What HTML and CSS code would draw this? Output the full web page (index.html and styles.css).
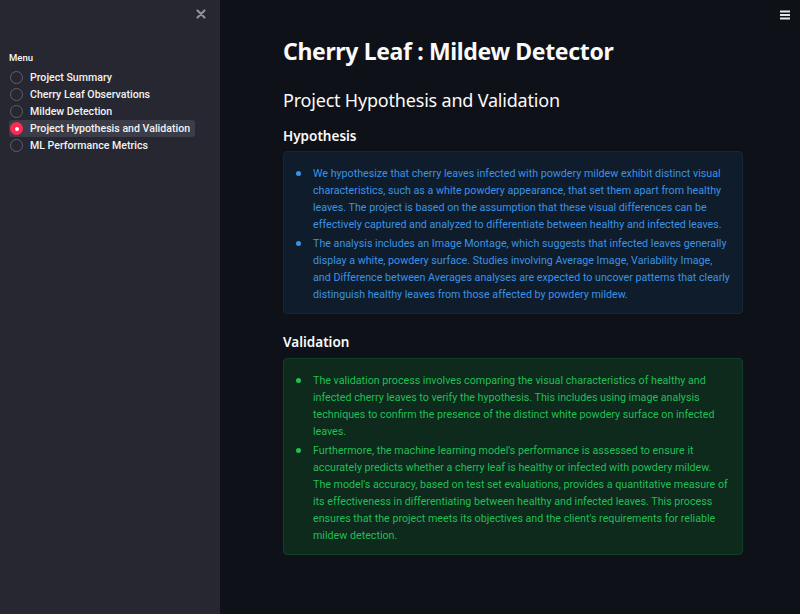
FILE: index.html
```html
<!DOCTYPE html>
<html>
<head>
<meta charset="utf-8">
<link rel="stylesheet" href="styles.css">
</head>
<body>
<div class="app">
  <aside class="sidebar">
    <div class="close">
      <svg width="10" height="10" viewBox="0 0 10 10"><path d="M1.5 1.5 L8.5 8.5 M8.5 1.5 L1.5 8.5" stroke="#8e9099" stroke-width="2.2" stroke-linecap="round"/></svg>
    </div>
    <div class="menu-label">Menu</div>
    <ul class="radios">
      <li class="radio"><span class="dot"></span>Project Summary</li>
      <li class="radio"><span class="dot"></span>Cherry Leaf Observations</li>
      <li class="radio"><span class="dot"></span>Mildew Detection</li>
      <li class="radio selected"><span class="dot"></span>Project Hypothesis and Validation</li>
      <li class="radio"><span class="dot"></span>ML Performance Metrics</li>
    </ul>
  </aside>
  <main class="main">
    <div class="hamburger">
      <svg width="10" height="10" viewBox="0 0 10 10"><path d="M0 1.5 H10 M0 5 H10 M0 8.5 H10" stroke="#e6e6e6" stroke-width="1.8"/></svg>
    </div>
    <div class="content">
      <h1 class="title">Cherry Leaf : Mildew Detector</h1>
      <h2 class="subtitle">Project Hypothesis and Validation</h2>
      <h3 class="section">Hypothesis</h3>
      <div class="alert info">
        <ul>
          <li>We hypothesize that cherry leaves infected with powdery mildew exhibit distinct visual characteristics, such as a white powdery appearance, that set them apart from healthy leaves. The project is based on the assumption that these visual differences can be effectively captured and analyzed to differentiate between healthy and infected leaves.</li>
          <li>The analysis includes an Image Montage, which suggests that infected leaves generally display a white, powdery surface. Studies involving Average Image, Variability Image, and Difference between Averages analyses are expected to uncover patterns that clearly distinguish healthy leaves from those affected by powdery mildew.</li>
        </ul>
      </div>
      <h3 class="section second">Validation</h3>
      <div class="alert success">
        <ul>
          <li>The validation process involves comparing the visual characteristics of healthy and infected cherry leaves to verify the hypothesis. This includes using image analysis techniques to confirm the presence of the distinct white powdery surface on infected leaves.</li>
          <li>Furthermore, the machine learning model's performance is assessed to ensure it accurately predicts whether a cherry leaf is healthy or infected with powdery mildew. The model's accuracy, based on test set evaluations, provides a quantitative measure of its effectiveness in differentiating between healthy and infected leaves. This process ensures that the project meets its objectives and the client's requirements for reliable mildew detection.</li>
        </ul>
      </div>
    </div>
  </main>
</div>
</body>
</html>
```

FILE: styles.css
```css
* { box-sizing: border-box; }
html, body { margin: 0; padding: 0; height: 100%; }
body {
  font-family: "Noto Sans", "Open Sans", sans-serif;
  background: #0e1117;
  color: #fafafa;
}
.app { display: flex; height: 614px; width: 800px; overflow: hidden; }
.sidebar {
  width: 220px;
  flex: none;
  background: #262730;
  padding: 8px 0 0 9px;
  position: relative;
}
.close { position: absolute; left: 196px; top: 9px; width: 10px; height: 10px; }
.close svg { display: block; }
.menu-label {
  margin-top: 43px;
  font-family: Roboto, sans-serif;
  font-size: 9.5px;
  font-weight: 500;
  line-height: 14px;
  color: #fafafa;
}
.radios { list-style: none; margin: 4px 0 0; padding: 0; }
.radio {
  display: flex;
  align-items: center;
  height: 17px;
  width: 186px;
  font-family: Roboto, sans-serif;
  font-size: 10.6px;
  font-weight: 500;
  color: #f2f2f2;
  border-radius: 3px;
  padding-left: 1px;
  white-space: nowrap;
}
.radio .dot {
  width: 13px; height: 13px;
  border-radius: 50%;
  border: 1.6px solid #5e606b;
  margin-right: 7px;
  flex: none;
}
.radio.selected { background: #3b3d48; }
.radio.selected .dot {
  border: none;
  background: #ff2b55;
  position: relative;
}
.radio.selected .dot::after {
  content: "";
  position: absolute;
  left: 4.5px; top: 4.5px;
  width: 4px; height: 4px;
  border-radius: 50%;
  background: #fff;
}
.main { flex: 1; position: relative; }
.hamburger { position: absolute; right: 10px; top: 10px; width: 10px; height: 10px; }
.hamburger svg { display: block; }
.content { width: 460px; margin-left: 63px; padding-top: 36px; }
.title {
  margin: 0;
  font-size: 23px;
  font-weight: 700;
  line-height: 30px;
  letter-spacing: -0.35px;
}
.subtitle {
  margin: 21px 0 0;
  font-size: 18px;
  font-weight: 400;
  line-height: 26px;
  letter-spacing: -0.2px;
}
.section {
  margin: 13px 0 0;
  font-size: 13.5px;
  font-weight: 600;
  line-height: 20px;
}
.section.second { margin-top: 18px; }
.alert {
  margin-top: 5px;
  border-radius: 4px;
  padding: 13px 12px 10px 11px;
  font-family: Roboto, sans-serif;
  font-size: 10.7px;
  line-height: 17px;
}
.section.second + .alert { margin-top: 6px; }
.alert ul { margin: 0; padding: 0 0 0 18px; list-style: none; }
.alert li { margin: 0 0 2px; position: relative; }
.alert li:last-child { margin-bottom: 0; }
.alert li::before {
  content: "";
  position: absolute;
  left: -17px;
  top: 6px;
  width: 5px;
  height: 5px;
  border-radius: 50%;
  background: currentColor;
}
.info {
  background: #0f1c2b;
  border: 1px solid #13273d;
  color: #3a93e6;
}
.success {
  background: #0d2a1d;
  border: 1px solid #124027;
  color: #22bf55;
}
```
